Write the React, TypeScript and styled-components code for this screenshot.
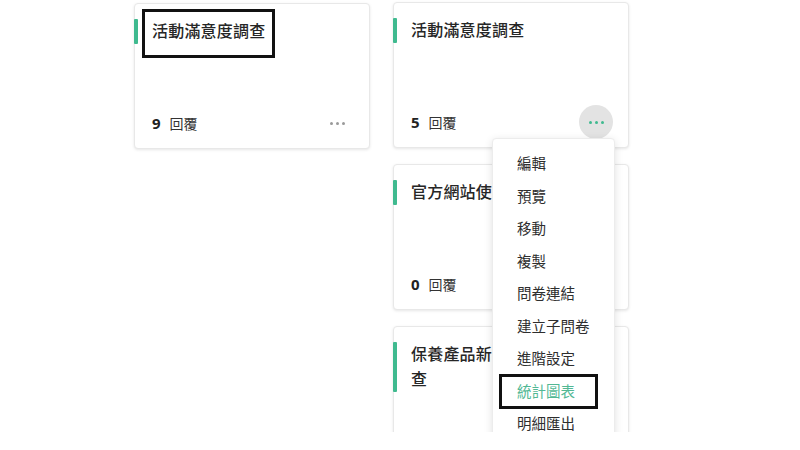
import React from 'react'
import styled, { createGlobalStyle } from 'styled-components'

const GlobalStyle = createGlobalStyle`
  html, body {
    margin: 0;
    padding: 0;
    background: #ffffff;
    font-family: 'Noto Sans', 'Noto Sans CJK TC', sans-serif;
    color: #2b2b2b;
  }
`

type Survey = {
  id: number
  title: string
  replies: number
}

const columns: Survey[][] = [
  [{ id: 1, title: '活動滿意度調查', replies: 9 }],
  [
    { id: 2, title: '活動滿意度調查', replies: 5 },
    { id: 3, title: '官方網站使用體驗調查', replies: 0 },
    { id: 4, title: '保養產品新品試用滿意度調查', replies: 2 },
  ],
]

const menuItems = ['編輯', '預覽', '移動', '複製', '問卷連結', '建立子問卷', '進階設定', '統計圖表', '明細匯出']

const App = () => {
  return (
    <Page>
      <GlobalStyle />
      <Board>
        {columns.map((col, ci) => (
          <Column key={ci} $shift={ci === 0 ? 1 : 0}>
            {col.map(survey => (
              <SurveyCard
                key={survey.id}
                survey={survey}
                marked={survey.id === 1}
                open={survey.id === 2}
              />
            ))}
          </Column>
        ))}
      </Board>
    </Page>
  )
}

const SurveyCard: React.FC<{ survey: Survey; marked?: boolean; open?: boolean }> = ({
  survey,
  marked,
  open,
}) => {
  return (
    <Card>
      <TitleRow>
        <Accent />
        <Title $marked={marked}>{survey.title}</Title>
      </TitleRow>
      <Footer>
        <Count>
          <strong>{survey.replies}</strong>
          <span>回覆</span>
        </Count>
        <MoreButton $active={open}>
          <Dot />
          <Dot />
          <Dot />
        </MoreButton>
      </Footer>
      {open && (
        <Menu>
          {menuItems.map(item => (
            <MenuItem key={item} $current={item === '統計圖表'}>
              {item}
            </MenuItem>
          ))}
        </Menu>
      )}
    </Card>
  )
}

const Page = styled.div`
  height: 432px;
  overflow: hidden;
  background: #fff;
`

const Board = styled.div`
  display: grid;
  grid-template-columns: 236px 236px;
  column-gap: 23px;
  align-items: start;
  padding: 2px 0 0 134px;
`

const Column = styled.div<{ $shift: number }>`
  display: flex;
  flex-direction: column;
  gap: 16px;
  margin-top: ${p => p.$shift}px;
`

const Card = styled.div`
  position: relative;
  height: 146px;
  box-sizing: border-box;
  display: flex;
  flex-direction: column;
  justify-content: space-between;
  background: #fff;
  border: 1px solid #e8e8e8;
  border-radius: 4px;
  box-shadow: 0 1px 3px rgba(0, 0, 0, 0.1);
  padding: 15px 0 8px 0;
`

const TitleRow = styled.div`
  display: flex;
  align-items: stretch;
  gap: 14px;
  padding-right: 22px;
`

const Accent = styled.div`
  flex: none;
  width: 4px;
  margin-left: -1px;
  background: #3fba8f;
  border-radius: 1px;
`

const Title = styled.div<{ $marked?: boolean }>`
  font-size: 16px;
  line-height: 25px;
  font-weight: 500;
  color: #262626;
  letter-spacing: 0.2px;
  align-self: flex-start;
  ${p =>
    p.$marked &&
    `
    padding-bottom: 4px;
    margin-bottom: -4px;
    outline: 3px solid #111;
    outline-offset: 7px;
  `}
`

const Footer = styled.div`
  display: flex;
  align-items: center;
  justify-content: space-between;
  padding: 0 15px 0 17px;
`

const Count = styled.div`
  display: flex;
  align-items: center;
  gap: 9px;
  strong {
    font-size: 15px;
    font-weight: 700;
    color: #222;
  }
  span {
    font-size: 14px;
    color: #333;
  }
`

const MoreButton = styled.div<{ $active?: boolean }>`
  width: 34px;
  height: 34px;
  border-radius: 50%;
  display: flex;
  align-items: center;
  justify-content: center;
  gap: 3px;
  background: ${p => (p.$active ? '#e3e3e3' : 'transparent')};
  color: ${p => (p.$active ? '#3fba8f' : '#9a9a9a')};
`

const Dot = styled.i`
  width: 3px;
  height: 3px;
  border-radius: 50%;
  background: currentColor;
`

const Menu = styled.ul`
  position: absolute;
  top: 135px;
  left: 98px;
  width: 121px;
  margin: 0;
  padding: 8px 0;
  list-style: none;
  background: #fff;
  border: 1px solid #ececec;
  border-radius: 4px;
  box-shadow: 0 2px 8px rgba(0, 0, 0, 0.12);
  z-index: 10;
`

const MenuItem = styled.li<{ $current?: boolean }>`
  height: 32.5px;
  line-height: 32.5px;
  padding-left: 24px;
  font-size: 14.5px;
  color: ${p => (p.$current ? '#52b894' : '#2e2e2e')};
  position: relative;
  ${p =>
    p.$current &&
    `
    &::after {
      content: '';
      position: absolute;
      left: 6px;
      right: 16px;
      top: -1px;
      bottom: -2px;
      border: 3px solid #111;
    }
  `}
`

export default App
